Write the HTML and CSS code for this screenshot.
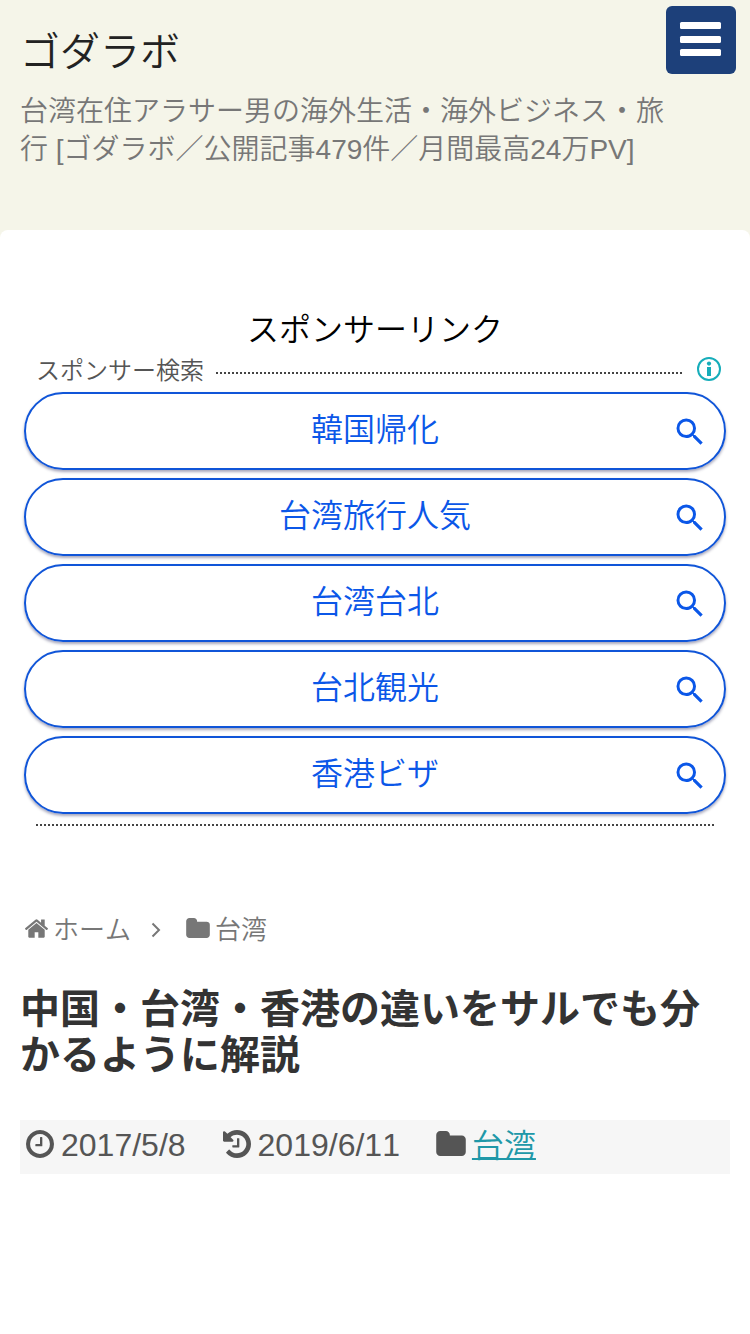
FILE: index.html
```
<!DOCTYPE html>
<html lang="ja">
<head>
    <meta charset="UTF-8">
    <meta name="viewport" content="width=device-width, initial-scale=1.0">
    <title>中国・台湾・香港の違いをサルでも分かるように解説 | ゴダラボ</title>
    <link rel="stylesheet" href="styles.css">
</head>
<body>
    <svg class="sprite">
        <symbol id="search" viewBox="0 0 24 24"><path d="M15.5 14h-.79l-.28-.27A6.47 6.47 0 0 0 16 9.5 6.5 6.5 0 1 0 9.5 16c1.61 0 3.09-.59 4.23-1.57l.27.28v.79l5 4.99L20.49 19l-4.99-5zm-6 0C7.01 14 5 11.99 5 9.5S7.01 5 9.5 5 14 7.01 14 9.5 11.99 14 9.5 14z"/></symbol>
        <symbol id="folder" viewBox="64 128 1664 1408"><path d="M1728 608v704q0 92-66 158t-158 66h-1216q-92 0-158-66t-66-158v-960q0-92 66-158t158-66h320q92 0 158 66t66 158v32h672q92 0 158 66t66 158z"/></symbol>
    </svg>

    <header class="header">
        <div class="site-name">
            <p class="site-title">ゴダラボ</p>
            <p class="site-description">台湾在住アラサー男の海外生活・海外ビジネス・旅行 [ゴダラボ／公開記事479件／月間最高24万PV]</p>
        </div>
        <button class="menu-button" aria-label="メニュー">
            <span></span>
            <span></span>
            <span></span>
        </button>
    </header>

    <main class="main">
        <section class="ad">
            <p class="ad-label">スポンサーリンク</p>
            <div class="ad-head">
                <span>スポンサー検索</span>
                <i class="dots"></i>
                <svg class="info" viewBox="0 0 24 24">
                    <circle cx="12" cy="12" r="11" fill="none" stroke="currentColor" stroke-width="2"/>
                    <circle cx="12" cy="6.6" r="2.1"/>
                    <path d="M10 10h4v9h-4z"/>
                </svg>
            </div>
            <div class="ad-links">
                <a class="ad-link">韓国帰化<svg class="search"><use href="#search"/></svg></a>
                <a class="ad-link">台湾旅行人気<svg class="search"><use href="#search"/></svg></a>
                <a class="ad-link">台湾台北<svg class="search"><use href="#search"/></svg></a>
                <a class="ad-link">台北観光<svg class="search"><use href="#search"/></svg></a>
                <a class="ad-link">香港ビザ<svg class="search"><use href="#search"/></svg></a>
            </div>
            <div class="dots ad-bottom"></div>
        </section>

        <nav class="breadcrumb">
            <svg class="icon-home" viewBox="89 253 1614 1283"><path d="M1472 992v480q0 26-19 45t-45 19h-384v-384h-256v384h-384q-26 0-45-19t-19-45v-480q0-1 .5-3t.5-3l575-474 575 474q1 2 1 6zm223-69l-62 74q-8 9-21 11h-3q-13 0-21-7l-692-577-692 577q-12 8-24 7-13-2-21-11l-62-74q-8-10-7-23.5t11-21.5l719-599q32-26 76-26t76 26l244 204v-195q0-14 9-23t23-9h192q14 0 23 9t9 23v408l219 182q10 8 11 21.5t-7 23.5z"/></svg>
            <span>ホーム</span>
            <svg class="icon-angle" viewBox="0 0 10 16"><path d="M1.5 1.5 8 8l-6.5 6.5" fill="none" stroke="currentColor" stroke-width="2"/></svg>
            <svg class="icon-folder"><use href="#folder"/></svg>
            <span>台湾</span>
        </nav>

        <article>
            <h1>中国・台湾・香港の違いをサルでも分かるように解説</h1>
            <div class="post-meta">
                <span class="meta-item">
                    <svg class="icon-clock" viewBox="0 128 1536 1536"><path d="M896 544v448q0 14-9 23t-23 9h-320q-14 0-23-9t-9-23v-64q0-14 9-23t23-9h224v-352q0-14 9-23t23-9h64q14 0 23 9t9 23zM1312 896q0-148-73-273t-198-198-273-73-273 73-198 198-73 273 73 273 198 198 273 73 273-73 198-198 73-273zM1536 896q0 209-103 385.5t-279.5 279.5-385.5 103-385.5-103-279.5-279.5-103-385.5 103-385.5 279.5-279.5 385.5-103 385.5 103 279.5 279.5 103 385.5z" fill-rule="evenodd"/></svg>
                    2017/5/8
                </span>
                <span class="meta-item">
                    <svg class="icon-clock" viewBox="128 128 1536 1536"><path d="M1664 896q0 156-61 298t-164 245-245 164-298 61q-172 0-327-72.5t-264-204.5q-7-10-6.5-22.5t8.5-20.5l137-138q10-9 25-9 16 2 23 12 73 95 179 147t225 52q104 0 198.5-40.5t163.5-109.5 109.5-163.5 40.5-198.5-40.5-198.5-109.5-163.5-163.5-109.5-198.5-40.5q-98 0-188 35.5t-160 101.5l137 138q31 30 14 69-17 40-59 40h-448q-26 0-45-19t-19-45v-448q0-42 40-59 39-17 69 14l130 129q107-101 244.5-156.5t284.5-55.5q156 0 298 61t245 164 164 245 61 298zm-640-288v448q0 14-9 23t-23 9h-320q-14 0-23-9t-9-23v-64q0-14 9-23t23-9h224v-352q0-14 9-23t23-9h64q14 0 23 9t9 23z"/></svg>
                    2019/6/11
                </span>
                <span class="meta-item category">
                    <svg class="icon-folder"><use href="#folder"/></svg>
                    <a href="#">台湾</a>
                </span>
            </div>
        </article>
    </main>
</body>
</html>
```
FILE: styles.css
```
* {
    box-sizing: border-box;
}

body {
    margin: 0;
    background-color: #f5f5e9;
    color: #333;
    font-family: "Liberation Sans", "Noto Sans CJK JP", sans-serif;
    font-weight: 350;
}

p, h1 {
    margin: 0;
}

svg {
    display: block;
    flex: none;
    fill: currentColor;
}

.sprite {
    display: none;
}

.header {
    display: flex;
    justify-content: space-between;
    align-items: flex-start;
    height: 230px;
    padding: 6px 14px 0 20px;
}

.site-name {
    width: 646px;
    padding-top: 22px;
}

.site-title {
    color: #222;
    font-size: 40px;
    line-height: 48px;
}

.site-description {
    margin-top: 17px;
    color: #777;
    font-size: 28px;
    line-height: 38px;
    word-break: break-all;
}

.menu-button {
    display: flex;
    flex-direction: column;
    align-items: flex-start;
    gap: 6.5px;
    width: 70px;
    height: 68px;
    padding: 16px 0 0 14px;
    border: none;
    border-radius: 6px;
    background-color: #1d407a;
}

.menu-button span {
    width: 41px;
    height: 7px;
    border-radius: 1.5px;
    background-color: #fff;
}

.main {
    height: 1104px;
    padding: 79px 20px 0;
    border-radius: 8px 8px 0 0;
    background-color: #fff;
}

.ad {
    padding: 0 4px;
}

.ad-label {
    color: #000;
    font-size: 32px;
    line-height: 42px;
    text-align: center;
}

.ad-head {
    display: flex;
    align-items: center;
    height: 41px;
    padding: 0 5px 4px 12px;
    color: #555;
    font-size: 24px;
    line-height: 34px;
}

.ad-head span {
    padding-top: 2px;
}

.dots {
    border-top: 2px dotted #444;
}

.ad-head .dots {
    flex: 1;
    margin: 7px 15px 0 12px;
}

.info {
    width: 24px;
    height: 24px;
    margin-bottom: 1px;
    color: #16adba;
}

.ad-links {
    display: grid;
    gap: 8px;
}

.ad-link {
    display: grid;
    grid-template-columns: 1fr auto 1fr;
    align-items: center;
    height: 78px;
    padding: 0 16px 3px;
    border: 2px solid #1055d8;
    border-radius: 39px;
    box-shadow: 0 2px 3px rgba(0, 0, 60, 0.35);
    color: #0b57e8;
    font-size: 32px;
    line-height: 68px;
}

.ad-link::before {
    content: "";
}

.search {
    justify-self: end;
    width: 36px;
    height: 36px;
    margin-top: 5px;
}

.ad-bottom {
    margin: 10px 12px 0;
}

.breadcrumb {
    display: flex;
    align-items: center;
    margin-top: 85px;
    padding-left: 5px;
    color: #777;
    font-size: 26px;
    line-height: 38px;
}

.icon-home {
    width: 23px;
    height: 19px;
    margin: 0 5px 3px 0;
}

.icon-angle {
    width: 10px;
    height: 16px;
    margin: 0 25px 0 20px;
}

.breadcrumb span {
    font-kerning: none;
}

.breadcrumb .icon-folder {
    width: 24px;
    height: 20px;
    margin: 0 5px 4px 0;
}

h1 {
    margin-top: 37px;
    font-size: 40px;
    font-weight: bold;
    line-height: 46px;
}

.post-meta {
    display: flex;
    height: 54px;
    margin-top: 42px;
    padding-left: 6px;
    background-color: #f6f6f6;
    color: #555;
    font-size: 32px;
    line-height: 50px;
    font-kerning: none;
}

.meta-item {
    display: flex;
    gap: 7px;
    margin-right: 37px;
}

.icon-clock {
    width: 28px;
    height: 28px;
    margin-top: 10px;
}

.category {
    gap: 6px;
    margin-left: -1px;
}

.category .icon-folder {
    width: 30px;
    height: 25px;
    margin-top: 11px;
}

.category a {
    color: #2098a8;
    line-height: 52px;
    text-decoration-thickness: 2px;
}
```
